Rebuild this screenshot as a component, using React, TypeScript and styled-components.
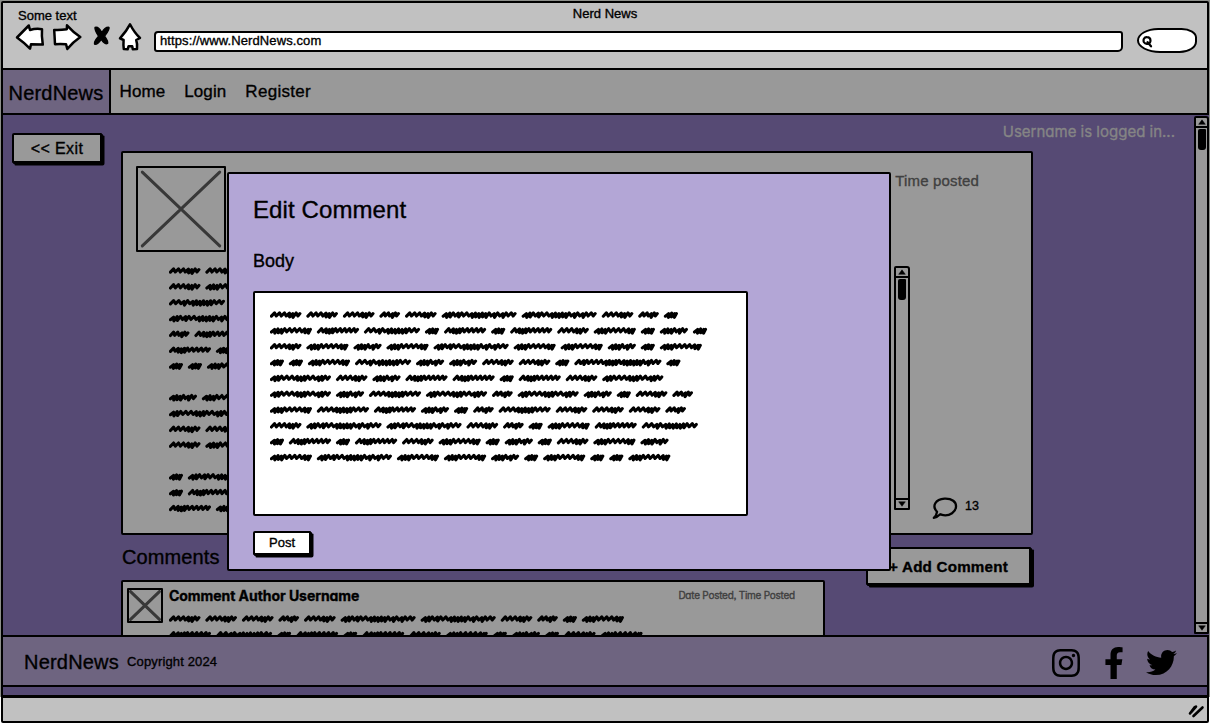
import React from "react";
import styled, { createGlobalStyle } from "styled-components";
import { FaInstagram, FaFacebookF, FaTwitter } from "react-icons/fa";

const GlobalStyle = createGlobalStyle`
  * { box-sizing: border-box; }
  body { margin: 0; background: #fff; }
`;

const ink = "#000";
const grey = "#999999";
const purple = "#564a74";
const mauve = "#6e6480";

const Page = styled.div`
  position: relative;
  width: 1210px;
  height: 724px;
  padding: 1px;
  overflow: hidden;
  background: linear-gradient(#8d8f8b 0 697px, #fff 697px);
  color: ${ink};
  font-family: "Liberation Sans", Arial, sans-serif;
  -webkit-text-stroke: 0.35px currentColor;
`;

const Window = styled.div`
  display: flex;
  flex-direction: column;
  width: 1208px;
  height: 722px;
  border: 2px solid ${ink};
  border-radius: 2px;
  background: #c1c1c1;
`;

const Label = styled.span<{ $size: number; $color?: string; $bold?: boolean; $round?: boolean; $spacing?: number }>`
  font-size: ${(p) => p.$size}px;
  line-height: 1.15;
  white-space: nowrap;
  color: ${(p) => p.$color ?? ink};
  font-weight: ${(p) => (p.$bold ? 700 : 400)};
  letter-spacing: ${(p) => p.$spacing ?? 0}px;
  ${(p) => p.$round && `font-family: Inter, "Liberation Sans", sans-serif; font-feature-settings: "cv11" 1, "ss03" 1;`}
`;

const Header = styled.header`
  flex: none;
  height: 65px;
`;

const TitleRow = styled.div`
  display: grid;
  grid-template-columns: 1fr auto 1fr;
  height: 19px;
  padding: 4px 0 0 15px;
  & > :first-child { padding-top: 2px; }
  & > :nth-child(2) { margin-left: -15px; }
`;

const Toolbar = styled.div`
  display: flex;
  align-items: flex-start;
  height: 40px;
  padding-left: 12px;
`;

const UrlBar = styled.div`
  width: 969px;
  height: 21px;
  margin: 9px 14px 0 8px;
  padding: 0 0 0 4px;
  border: 2.5px solid ${ink};
  border-radius: 4px 3px 5px 3px;
  background: #fff;
  line-height: 14px;
`;

const SearchBox = styled.div`
  width: 60px;
  height: 25px;
  margin-top: 6px;
  padding: 6px 0 0 3px;
  border: 2.5px solid ${ink};
  border-radius: 22px 16px 18px 24px / 13px 10px 12px 13px;
  background: #fff;
`;

const Nav = styled.nav`
  display: flex;
  flex: none;
  width: 1206px;
  height: 47px;
  border: solid ${ink};
  border-width: 2px 2px 2px 0;
  background: ${grey};
`;

const Brand = styled.div`
  width: 108px;
  padding: 12px 0 0 5.5px;
  border-right: 2.5px solid ${ink};
  background: ${mauve};
`;

const NavLinks = styled.div`
  display: flex;
  gap: 19px;
  padding: 12px 0 0 8.5px;
`;

const Main = styled.main`
  display: flex;
  flex: none;
  width: 1206px;
  height: 520px;
  overflow: hidden;
  background: ${purple};
`;

const Aside = styled.aside`
  width: 118px;
  padding: 18px 0 0 9px;
`;

const Button = styled.button<{ $w: number; $h: number; $white?: boolean; $depth?: number }>`
  display: flex;
  align-items: center;
  justify-content: center;
  flex: none;
  width: ${(p) => p.$w}px;
  height: ${(p) => p.$h}px;
  padding: 1.5px 0 0;
  border: 2.4px solid ${ink};
  border-radius: 2px 1px 2px 1px;
  background: ${(p) => (p.$white ? "#fff" : grey)};
  box-shadow: 1px 1px 0 ${ink}, ${(p) => p.$depth ?? 2.5}px 2.5px 0 ${ink};
  font-family: inherit;
  -webkit-text-stroke: inherit;
`;

const Content = styled.section`
  width: 1073px;
`;

const StatusRow = styled.div`
  height: 36px;
  padding: 8px 19px 0 0;
  text-align: right;
`;

const PostCard = styled.article`
  width: 912px;
  height: 384px;
  padding: 13px 0 0 13px;
  border: 2.4px solid ${ink};
  border-radius: 2px;
  background: ${grey};
`;

const PostHead = styled.div`
  display: flex;
  justify-content: space-between;
  height: 100px;
  padding-right: 52px;
  & > span { padding-top: 6px; }
`;

const PostBody = styled.div`
  display: flex;
`;

const PostText = styled.div`
  flex: none;
  width: 758px;
  padding-left: 32.5px;
`;

const Frame = styled.div<{ $w: number; $h: number }>`
  flex: none;
  width: ${(p) => p.$w}px;
  height: ${(p) => p.$h}px;
  border: 2.4px solid ${ink};
  border-radius: 1px;
  svg { display: block; width: 100%; height: 100%; }
`;

const Track = styled.div<{ $w: number; $h: number }>`
  display: flex;
  flex-direction: column;
  flex: none;
  width: ${(p) => p.$w}px;
  height: ${(p) => p.$h}px;
  border: 2px solid ${ink};
  border-radius: 2px 3px 1px 1px;
  background: ${grey};
`;

const Cap = styled.div<{ $end?: boolean }>`
  display: flex;
  align-items: center;
  justify-content: center;
  flex: none;
  height: 10px;
  ${(p) => (p.$end ? `margin-top: auto; border-top: 2px solid ${ink};` : `border-bottom: 2px solid ${ink};`)}
`;

const Thumb = styled.div`
  width: 8px;
  height: 21px;
  margin: 1px 0 0 2px;
  border-radius: 2px 1px 3px 3px;
  background: ${ink};
`;

const Replies = styled.div`
  display: flex;
  gap: 7px;
  align-self: flex-start;
  margin: 231px 0 0 22px;
  & > span { padding-top: 2px; }
`;

const Lower = styled.div`
  display: flex;
  width: 912px;
`;

const CommentsColumn = styled.div`
  width: 745px;
`;

const CommentsTitle = styled.div`
  height: 45px;
  padding: 11px 0 0 1px;
`;

const CommentCard = styled.article`
  display: flex;
  width: 704px;
  height: 120px;
  padding: 6px 0 0 4px;
  border: 2.4px solid ${ink};
  border-radius: 2px;
  background: ${grey};
`;

const CommentBody = styled.div`
  flex: 1;
  margin-left: 6px;
`;

const CommentMeta = styled.div`
  display: flex;
  justify-content: space-between;
  align-items: center;
  height: 16px;
  padding-right: 28px;
  margin-bottom: 10px;
`;

const AddWrap = styled.div`
  padding-top: 12px;
`;

const ScrollColumn = styled.div`
  width: 15px;
  padding-top: 1px;
`;

const Footer = styled.footer`
  display: flex;
  flex: none;
  width: 1206px;
  height: 52px;
  padding: 2px 30px 0 21px;
  align-items: center;
  border: solid ${ink};
  border-width: 2px 2px 2px 0;
  background: ${mauve};
  & > span + span { margin-left: 8px; }
`;

const Social = styled.div`
  display: flex;
  align-items: center;
  gap: 16px;
  margin-left: auto;
  padding-top: 1px;
  svg { display: block; }
`;

const Strip = styled.div`
  flex: none;
  height: 8px;
  background: ${purple};
`;

const StatusBar = styled.div`
  display: flex;
  flex: 1;
  justify-content: flex-end;
  padding: 6px 2px 0 0;
  border-top: 3px solid ${ink};
`;

const Modal = styled.div`
  position: absolute;
  left: 227px;
  top: 172px;
  display: flex;
  flex-direction: column;
  align-items: flex-start;
  width: 664px;
  height: 399px;
  padding: 22px 0 0 24px;
  border: 2.4px solid ${ink};
  border-radius: 2px;
  background: #b3a6d6;
`;

const BodyLabel = styled.div`
  margin-top: 27px;
`;

const Field = styled.div`
  width: 495px;
  height: 225px;
  margin: 20px 0 14.5px;
  padding: 16.5px 0 0 15px;
  border: 2.4px solid ${ink};
  border-radius: 2px;
  background: #fff;
`;

/* Scribbled words: width and a rhythm of loose (l) and tight (t) strokes. */
const WORDS: Record<string, [number, string]> = {
  a: [14, "ttt"],
  b: [20.5, "lltl"],
  c: [28, "tttltl"],
  d: [31.5, "lllttl"],
  e: [42, "tttlllltt"],
  f: [42, "ltttlllll"],
  g: [56, "lltlttttttll"],
  h: [75, "ttltlltttttltltll"],
  i: [61, "ttllltttllttl"],
  j: [52, "llltttttlll"],
  k: [87, "ltllllttttlttttttltll"],
};
const GAP = 5.05;
const LINE = 15.83;

function wordPath(code: string, x0: number, y0: number): string {
  const [width, rhythm] = WORDS[code];
  const steps = rhythm.split("").map((s) => (s === "l" ? 4.4 : 3));
  const scale = (width - 5) / steps.reduce((sum, s) => sum + s, 0);
  let x = x0 + 1.4;
  let d = `M${x.toFixed(1)} ${(y0 + 1.2).toFixed(1)}`;
  steps.forEach((s, i) => {
    const loose = rhythm[i] === "l";
    const top = y0 - (loose ? 2.1 : 1.3 + (i % 2) * 0.6);
    const bottom = y0 + (loose ? 1 : 2.4 - (i % 2) * 0.4);
    d += `L${(x + 3.2).toFixed(1)} ${top.toFixed(1)}`;
    x += s * scale;
    d += `L${x.toFixed(1)} ${bottom.toFixed(1)}`;
  });
  return d + `L${(x + 2).toFixed(1)} ${(y0 - 1.4).toFixed(1)}`;
}

function Scribble({ lines, width }: { lines: string[]; width: number }) {
  const d = lines
    .map((line, row) => {
      let x = 0;
      return line
        .split("")
        .map((code) => {
          const path = wordPath(code, x, 5 + row * LINE);
          x += WORDS[code][0] + GAP;
          return path;
        })
        .join("");
    })
    .join("");
  const height = lines.length * LINE;
  return (
    <svg width={width} height={height} viewBox={`0 0 ${width} ${height}`} style={{ display: "block" }}>
      <path d={d} fill="none" stroke={ink} strokeWidth="3.1" strokeLinecap="round" strokeLinejoin="round" />
    </svg>
  );
}

const POST = ["dde", "dee", "gf", "hd", "bfd", "fad", "aae", "", "ce", "id", "dde", "de", "", "ah", "af", "fcd"];
const COMMENT = ["dddbdhhdbae", "fgafafdeacade"];
const DRAFT = [
  "dddbdhhdba",
  "efgafafdeaca",
  "deceheecae",
  "aaegccddaka",
  "idcffafdi",
  "icjibicadb",
  "ejfcabjdddb",
  "dhhdbaefg",
  "afafdeacadec",
  "eheecaeaae",
];

function Crossed({ w, h }: { w: number; h: number }) {
  return (
    <Frame $w={w} $h={h}>
      <svg viewBox="0 0 100 100" preserveAspectRatio="none">
        <path d="M5 5L95 95M95 5L5 95" stroke="#383838" strokeWidth="3" vectorEffect="non-scaling-stroke" strokeLinecap="round" />
      </svg>
    </Frame>
  );
}

function Scrollbar({ w, h }: { w: number; h: number }) {
  return (
    <Track $w={w} $h={h}>
      <Cap>
        <svg width="8" height="6" viewBox="0 0 8 6"><path d="M4 .8L7.3 5.3H.7Z" stroke={ink} strokeWidth=".5" strokeLinejoin="round" /></svg>
      </Cap>
      <Thumb />
      <Cap $end>
        <svg width="8" height="6" viewBox="0 0 8 6"><path d="M4 5.3L7.3 .8H.7Z" stroke={ink} strokeWidth=".5" strokeLinejoin="round" /></svg>
      </Cap>
    </Track>
  );
}

function BrowserIcons() {
  return (
    <svg width="131" height="32" viewBox="15 22 131 32">
      <g fill="#fff" stroke={ink} strokeWidth="2.5" strokeLinejoin="round" strokeLinecap="round">
        <path d="M17 37.5L28.8 25.5L30 30Q36 28.2 42 29.2Q41.4 36 42.8 44.6L31 44.2L30 48.6Q24 42.5 17 37.5Z" />
        <path d="M54.2 30Q60 30.4 66.8 29.3L67 25.3Q73.5 32.5 80.3 37Q73 42 67.3 49L66 44.2Q60 43.6 55 44.2Q54.6 36 54.2 30Z" />
        <path d="M130 24.3Q134.5 33 140 38L136.2 40Q137.6 44 137 49L132.8 49.3L132.2 46.2H128.6L127.6 49.3L123.8 49Q123.2 45 123.6 40L120 38.4Q126.5 31 130 24.3Z" />
      </g>
      <path d="M95 27.4C98 26.6 100.5 30 101.8 32.7C103.5 29.5 106 27 109 27.3C109.8 30 106.5 33.5 104.6 36C106 38.5 108.5 41 107.6 43.5C105 44.6 102.500 41.500 101.3 39.3C99.8 41.500 97.500 44.8 94.6 44.2C93.5 41.5 96.8 38.5 98.6 36.2C97 33.5 94.5 30.5 95 27.4Z" fill={ink} stroke={ink} strokeWidth="1.3" strokeLinejoin="round" />
    </svg>
  );
}

export default function App() {
  return (
    <Page>
      <GlobalStyle />
      <Window>
        <Header>
          <TitleRow>
            <Label $size={13}>Some text</Label>
            <Label $size={13}>Nerd News</Label>
          </TitleRow>
          <Toolbar>
            <BrowserIcons />
            <UrlBar><Label $size={13} $spacing={0.1}>https://www.NerdNews.com</Label></UrlBar>
            <SearchBox>
              <svg width="12" height="12" viewBox="0 0 12 12" style={{ display: "block" }}>
                <path d="M5 1.2C2 1 .9 4 2 6.3C3.4 8.7 7.8 8.3 8.4 5.2C8.8 2.4 7 1.2 5 1.2ZM5.6 6.2L9 10.3" fill="none" stroke={ink} strokeWidth="2.2" strokeLinecap="round" />
              </svg>
            </SearchBox>
          </Toolbar>
        </Header>

        <Nav>
          <Brand><Label $size={20} $spacing={0.2}>NerdNews</Label></Brand>
          <NavLinks>
            <Label $size={17} $spacing={0.1}>Home</Label>
            <Label $size={17} $spacing={0.1}>Login</Label>
            <Label $size={17} $spacing={0.3}>Register</Label>
          </NavLinks>
        </Nav>

        <Main>
          <Aside>
            <Button $w={90} $h={30}><Label $size={16} $spacing={0.4}>&lt;&lt; Exit</Label></Button>
          </Aside>
          <Content>
            <StatusRow>
              <Label $size={15} $color="#858585" $round>Username is logged in...</Label>
            </StatusRow>
            <PostCard>
              <PostHead>
                <Crossed w={90} h={86} />
                <Label $size={15} $color="#404040" $spacing={0.15}>Time posted</Label>
              </PostHead>
              <PostBody>
                <PostText><Scribble lines={POST} width={680} /></PostText>
                <Scrollbar w={16} h={244} />
                <Replies>
                  <svg width="26" height="23" viewBox="0 0 26 23">
                    <path d="M5 14.8C-.5 9 3.5 2.2 12.5 1.6C20 1.2 24.4 5 24 9.8C23.6 15 18 19 11.5 18.2C10 18 9.2 17.600 8.2 17.2C6.4 19 4 20.6 1.8 20.8C3.8 19 4.8 17 5 14.8Z" fill="none" stroke={ink} strokeWidth="2.3" strokeLinejoin="round" />
                  </svg>
                  <Label $size={12.5}>13</Label>
                </Replies>
              </PostBody>
            </PostCard>
            <Lower>
              <CommentsColumn>
                <CommentsTitle><Label $size={20} $spacing={0.1}>Comments</Label></CommentsTitle>
                <CommentCard>
                  <Crossed w={36} h={35} />
                  <CommentBody>
                    <CommentMeta>
                      <Label $size={14} $bold $round $spacing={-0.05}>Comment Author Username</Label>
                      <Label $size={10} $color="#404040" $round $spacing={-0.25}>Date Posted, Time Posted</Label>
                    </CommentMeta>
                    <Scribble lines={COMMENT} width={500} />
                  </CommentBody>
                </CommentCard>
              </CommentsColumn>
              <AddWrap>
                <Button $w={165} $h={38} $depth={3}><Label $size={15.2} $bold $spacing={0.2}>+ Add Comment</Label></Button>
              </AddWrap>
            </Lower>
          </Content>
          <ScrollColumn><Scrollbar w={15} h={518} /></ScrollColumn>
        </Main>

        <Footer>
          <Label $size={20} $spacing={0.2}>NerdNews</Label>
          <Label $size={13} $spacing={0.15}>Copyright 2024</Label>
          <Social>
            <FaInstagram size={32} />
            <FaFacebookF size={32} />
            <FaTwitter size={31} />
          </Social>
        </Footer>
        <Strip />
        <StatusBar>
          <svg width="17" height="14" viewBox="0 0 17 14">
            <path d="M2 9.5L6.8 3M5.5 12L14.5 3.5M3.2 8.2L8 2.6" fill="none" stroke={ink} strokeWidth="2.6" strokeLinecap="round" />
          </svg>
        </StatusBar>
      </Window>

      <Modal>
        <Label $size={24} $spacing={0.1}>Edit Comment</Label>
        <BodyLabel><Label $size={18}>Body</Label></BodyLabel>
        <Field><Scribble lines={DRAFT} width={450} /></Field>
        <Button $w={58} $h={24} $white><Label $size={13}>Post</Label></Button>
      </Modal>
    </Page>
  );
}
